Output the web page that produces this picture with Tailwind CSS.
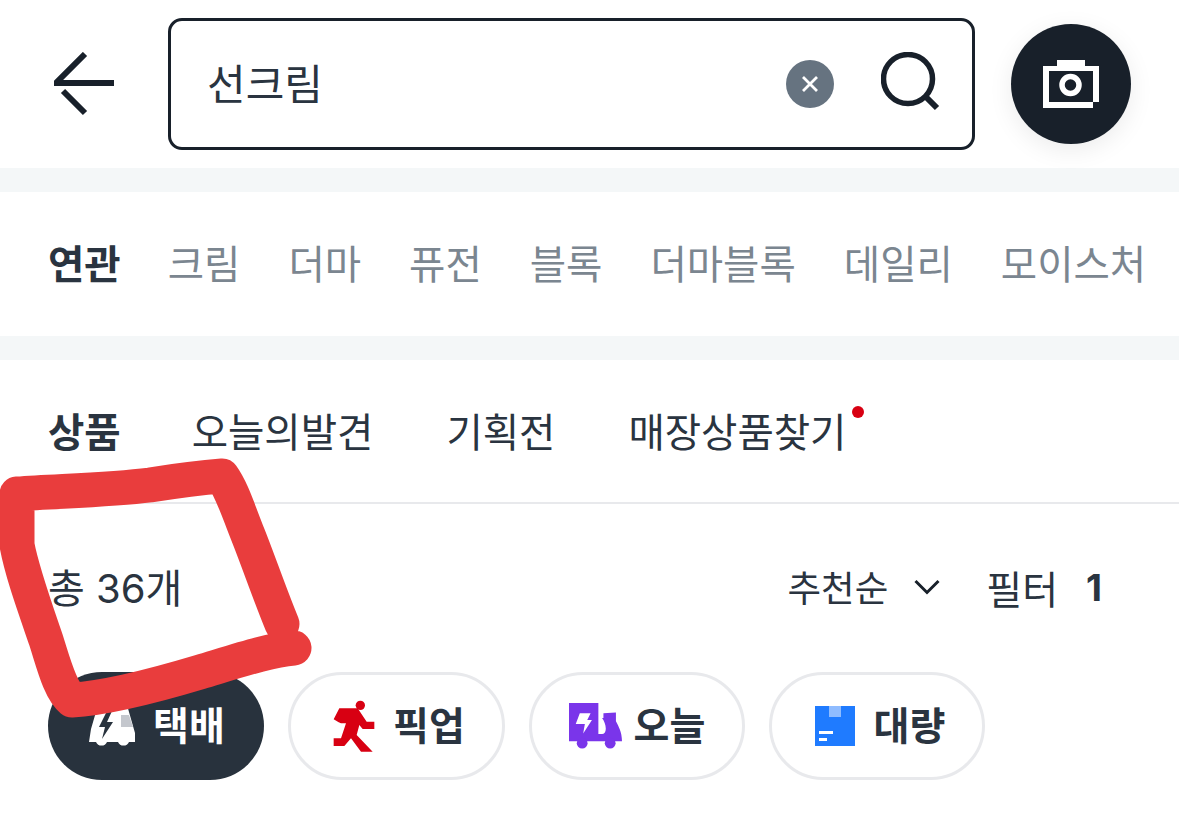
<!DOCTYPE html>
<html lang="ko">
<head>
  <meta charset="UTF-8" />
  <meta name="viewport" content="width=device-width, initial-scale=1.0" />
  <title>선크림 검색</title>
  <script src="https://cdn.jsdelivr.net/npm/@tailwindcss/browser@4"></script>
</head>
<body class="bg-white text-[#2a3440] font-['Noto_Sans_CJK_KR','Noto_Sans',sans-serif] overflow-hidden">
  <div class="relative w-[1179px] h-[816px] overflow-hidden">

    <!-- search bar -->
    <header class="h-[168px] flex items-center pl-[54px] pr-[48px]">
      <button class="w-[114px] shrink-0">
        <svg width="62" height="64" viewBox="0 0 62 64" fill="none" stroke="#18202a" stroke-width="6">
          <path d="M31 2 2 31H60" />
          <path d="M9 39 31 61" />
        </svg>
      </button>
      <div class="w-[807px] h-[132px] shrink-0 border-[3px] border-[#18202a] rounded-[14px] flex items-center pl-[36px] pr-[31px]">
        <span class="text-[42px] leading-none flex-1 -mt-1">선크림</span>
        <span class="w-[48px] h-[48px] rounded-full bg-[#667380] flex items-center justify-center">
          <svg width="18" height="18" viewBox="0 0 18 18" stroke="#fff" stroke-width="2.8"><path d="M2 2 16 16M16 2 2 16" /></svg>
        </span>
        <svg class="ml-[47px] -mt-1" width="60" height="60" viewBox="0 0 60 60" fill="none" stroke="#18202a">
          <circle cx="27" cy="27" r="24.5" stroke-width="5.5" />
          <path d="M45 45 56 56" stroke-width="6" />
        </svg>
      </div>
      <div class="ml-[36px] w-[120px] h-[120px] shrink-0 rounded-full bg-[#18202a] shadow-[0_6px_24px_rgba(0,0,0,0.08)] flex items-center justify-center">
        <svg width="56" height="48" viewBox="0 0 56 48" fill="#fff">
          <path fill-rule="evenodd" d="M14 0H42V6H56V42H50V48H0V6H14ZM6 11V42H50V11Z" />
          <circle cx="27.500" cy="25" r="8.500" fill="none" stroke="#fff" stroke-width="5.500" />
        </svg>
      </div>
    </header>

    <div class="h-[24px] bg-[#f4f7f8]"></div>

    <!-- related keywords -->
    <nav class="h-[144px] flex items-center pl-[48px] pb-[4px] gap-[48px] text-[39.5px] leading-none text-[#7b8690] whitespace-nowrap">
      <span class="font-bold text-[#2a3440] -mr-[1px]">연관</span>
      <span>크림</span>
      <span>더마</span>
      <span>퓨전</span>
      <span>블록</span>
      <span>더마블록</span>
      <span>데일리</span>
      <span>모이스처</span>
    </nav>

    <div class="h-[24px] bg-[#f4f7f8]"></div>

    <!-- tabs -->
    <nav class="h-[144px] border-b-[2px] border-[#e8e9ec] flex items-center pl-[48px] pb-[2px] gap-[73px] text-[39.5px] leading-none whitespace-nowrap">
      <span class="font-bold -mr-[2px]">상품</span>
      <span>오늘의발견</span>
      <span>기획전</span>
      <span class="relative">매장상품찾기<i class="absolute -right-[18px] -top-[4px] w-[12px] h-[12px] rounded-full bg-[#d80012]"></i></span>
    </nav>

    <!-- count and sort -->
    <div class="h-[168px] flex items-center pl-[48px] pr-[77px] pb-[2px] text-[39px] leading-none whitespace-nowrap">
      <span class="flex-1 text-[40px]">총 <span class="font-['Inter']">36</span>개</span>
      <span class="text-[36.5px]">추천순</span>
      <svg class="ml-[26px] mr-[46px]" width="26" height="16" viewBox="0 0 26 16" fill="none" stroke="#18202a" stroke-width="3"><path d="M1.500 2 13 13.500 24.500 2" /></svg>
      <span>필터</span>
      <span class="ml-[28px] font-bold font-['Inter'] text-[37px]">1</span>
    </div>

    <!-- delivery chips -->
    <div class="flex pl-[48px] gap-[24px] text-[39px] leading-none font-bold whitespace-nowrap">
      <div class="w-[216px] h-[108px] rounded-full bg-[#28323d] text-white flex items-center justify-center gap-[18px] pl-[2px]">
        <svg width="46" height="46" viewBox="0 0 46 46">
          <path fill="#fff" d="M9 2H30L30 2H38L46 30V39H40A6 6 0 0 1 29 39H18A6 6 0 0 1 7 39H0L2 26Z" />
          <path fill="#c4c7cd" d="M32 12H40L44 24H32Z" />
          <path fill="#28323d" d="M18 8 10 24H16L13 36 24 19H18L23 8Z" />
        </svg>
        <span class="-mt-[6px]">택배</span>
      </div>

      <div class="w-[217px] h-[108px] rounded-full border-[3px] border-[#e8e9ec] flex items-center justify-center gap-[18px] pl-[5px]">
        <svg width="42" height="52" viewBox="163 120 122 156" fill="#d80012">
          <circle cx="243" cy="136" r="14" />
          <path d="M163 178 180 145H235L262 185H285V207H250L240 195 232 225 280 275H245L215 235 195 258H163V235H185L200 190 185 190 178 187Z" />
        </svg>
        <span class="-mt-[6px]">픽업</span>
      </div>

      <div class="w-[216px] h-[108px] rounded-full border-[3px] border-[#e8e9ec] flex items-center justify-center gap-[12px]">
        <svg width="53" height="46" viewBox="148 130 157 136">
          <path fill="#7a35ea" d="M148 130H235V222H246C252 222 257 216 257 206 257 194 252 182 246 174H250V160L287 158V184C294 198 305 216 305 243H148Z" />
          <circle cx="187" cy="249" r="16" fill="#7a35ea" />
          <circle cx="270" cy="249" r="16" fill="#7a35ea" />
          <path fill="#fff" d="M180 160H212L202 180H216L190 220 195 192H168Z" />
        </svg>
        <span class="-mt-[6px]">오늘</span>
      </div>

      <div class="w-[216px] h-[108px] rounded-full border-[3px] border-[#e8e9ec] flex items-center justify-center gap-[19px] pl-[6px]">
        <svg width="40" height="40" viewBox="0 0 40 40">
          <rect width="40" height="40" fill="#1f7bff" />
          <rect x="14" width="12" height="11" fill="#8fbcff" />
          <rect x="4" y="25" width="14" height="3" fill="#fff" />
          <rect x="4" y="32" width="8" height="3" fill="#fff" />
        </svg>
        <span class="-mt-[6px]">대량</span>
      </div>
    </div>

    <!-- hand drawn annotation over the page -->
    <svg class="absolute inset-0 pointer-events-none" width="1179" height="816" viewBox="0 0 1179 816" fill="none" stroke="#e93d3d" stroke-width="35" stroke-linecap="round" stroke-linejoin="round">
      <path d="M294 648C270 650 240 660 200 672 160 684 110 698 72 700 60 690 54 665 46 640 34 605 22 572 17 545L17 494C60 491 110 490 150 485 175 481 195 478 222 476 232 490 238 510 248 535 258 560 270 595 282 624" />
    </svg>
  </div>
</body>
</html>
